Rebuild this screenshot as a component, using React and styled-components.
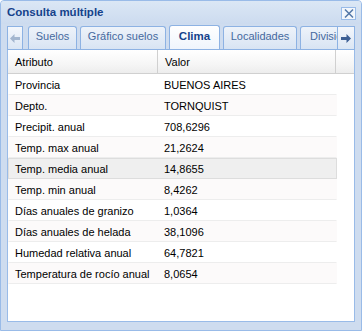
import React from 'react';
import styled, { createGlobalStyle } from 'styled-components';

const Global = createGlobalStyle`
  html, body { margin: 0; padding: 0; background: #ffffff; }
  body { font-family: Tahoma, "Liberation Sans", Arial, sans-serif; }
`;

const Window = styled.div`
  width: 362px;
  height: 331px;
  box-sizing: border-box;
  background: #cedcef;
  border: 1px solid #99bbe8;
  border-radius: 4px 4px 0 0;
  display: flex;
  flex-direction: column;
  overflow: hidden;
`;

const TitleBar = styled.div`
  height: 23px;
  display: flex;
  align-items: center;
  justify-content: space-between;
  padding: 0 5px 0 6px;
  background: linear-gradient(#dbe7f5, #ccdbef);
  flex: none;
`;

const Title = styled.span`
  font: bold 11.5px "Liberation Sans", Arial, sans-serif;
  color: #15428b;
  margin-top: -1px;
`;

const CloseBtn = styled.div`
  width: 15px;
  height: 13px;
  box-sizing: border-box;
  margin-top: 1px;
  border: 1px solid #99bbe8;
  background: #f3f7fc;
  display: flex;
  align-items: center;
  justify-content: center;
`;

const TabStrip = styled.div`
  height: 25px;
  margin: 0 6px;
  display: flex;
  align-items: flex-end;
  border-bottom: 1px solid #8db2e3;
  flex: none;
`;

const Scroller = styled.div`
  width: ${p => p.$w}px;
  height: 23px;
  box-sizing: border-box;
  border: 1px solid #8db2e3;
  border-bottom: none;
  background: linear-gradient(#f4f7fc, #dbe6f4);
  display: flex;
  align-items: center;
  justify-content: center;
  flex: none;
`;

const Clip = styled.div`
  display: flex;
  align-items: flex-end;
  gap: 3px;
  width: 314px;
  padding-left: 5px;
  box-sizing: border-box;
  overflow: hidden;
  flex: none;
  height: 25px;
`;

const Tab = styled.div`
  width: ${p => p.$w}px;
  height: ${p => (p.$active ? 25 : 23)}px;
  box-sizing: border-box;
  border: 1px solid #8db2e3;
  border-bottom: none;
  border-radius: 3px 3px 0 0;
  background: ${p => (p.$active ? 'linear-gradient(#ffffff, #eef4fc)' : 'linear-gradient(#eef3fa, #d8e4f3)')};
  color: ${p => (p.$active ? '#15428b' : '#45699e')};
  font: ${p => (p.$active ? 'bold 11.5px' : '11px')} "Liberation Sans", Arial, sans-serif;
  line-height: 14px;
  display: flex;
  align-items: flex-start;
  justify-content: ${p => (p.$clip ? 'flex-start' : 'center')};
  padding-left: ${p => (p.$clip ? 9 : 0)}px;
  padding-top: ${p => (p.$active ? 3 : 2)}px;
  white-space: nowrap;
  overflow: hidden;
  flex: none;
  margin-bottom: ${p => (p.$active ? -1 : 0)}px;
`;

const Body = styled.div`
  margin: 0 6px;
  height: 272px;
  box-sizing: border-box;
  background: #ffffff;
  border: 1px solid #99bbe8;
  border-top: none;
  display: flex;
  flex-direction: column;
`;

const Header = styled.div`
  display: flex;
  height: 23px;
  background: linear-gradient(#ffffff, #f6f6f6 60%, #ededed);
  border-bottom: 1px solid #d0d0d0;
  flex: none;
`;

const HeadCell = styled.div`
  width: ${p => p.$w}px;
  flex: ${p => (p.$w ? 'none' : 1)};
  box-sizing: border-box;
  padding-left: 7px;
  border-right: 1px solid #d0d0d0;
  display: flex;
  align-items: center;
  font: 11px "Liberation Sans", Arial, sans-serif;
  color: #000;
  &:last-child { border-right: none; }
`;

const Rows = styled.div`
  width: 329px;
  display: flex;
  flex-direction: column;
`;

const Row = styled.div`
  display: flex;
  height: 21px;
  box-sizing: border-box;
  border: 1px solid ${p => (p.$hover ? '#dddddd' : 'transparent')};
  border-bottom: 1px solid ${p => (p.$hover ? '#dddddd' : '#ededed')};
  background: ${p => (p.$hover ? '#efefef' : p.$alt ? '#fcfafa' : '#ffffff')};
`;

const Cell = styled.div`
  width: ${p => p.$w}px;
  flex: ${p => (p.$w ? 'none' : 1)};
  box-sizing: border-box;
  padding-left: 6px;
  display: flex;
  align-items: center;
  font: 11px "Liberation Sans", Arial, sans-serif;
  color: #000;
  white-space: nowrap;
`;

const data = [
  ['Provincia', 'BUENOS AIRES'],
  ['Depto.', 'TORNQUIST'],
  ['Precipit. anual', '708,6296'],
  ['Temp. max anual', '21,2624'],
  ['Temp. media anual', '14,8655'],
  ['Temp. min anual', '8,4262'],
  ['Días anuales de granizo', '1,0364'],
  ['Días anuales de helada', '38,1096'],
  ['Humedad relativa anual', '64,7821'],
  ['Temperatura de rocío anual', '8,0654'],
];

const tabs = [
  { label: 'Suelos', w: 49 },
  { label: 'Gráfico suelos', w: 86 },
  { label: 'Clima', w: 51, active: true },
  { label: 'Localidades', w: 74 },
  { label: 'Divisiones', w: 70, clip: true },
];

const Arrow = ({ dir }) => (
  <svg width="10" height="9" viewBox="0 0 10 9">
    <path
      d={dir === 'left' ? 'M0 4.5 L4.5 0 L4.5 3 L10 3 L10 6 L4.5 6 L4.5 9 Z' : 'M10 4.5 L5.5 0 L5.5 3 L0 3 L0 6 L5.5 6 L5.5 9 Z'}
      fill={dir === 'left' ? '#a3b6cf' : '#3d5f94'}
    />
  </svg>
);

const App = () => (
  <>
    <Global />
    <Window>
      <TitleBar>
        <Title>Consulta múltiple</Title>
        <CloseBtn>
          <svg width="10" height="9" viewBox="0 0 10 9">
            <path d="M1 0.5 L9 8.5 M9 0.5 L1 8.5" stroke="#5578a8" strokeWidth="1.5" />
          </svg>
        </CloseBtn>
      </TitleBar>
      <TabStrip>
        <Scroller $w={16}><Arrow dir="left" /></Scroller>
        <Clip>
          {tabs.map(t => (
            <Tab key={t.label} $w={t.w} $active={t.active} $clip={t.clip}>{t.label}</Tab>
          ))}
        </Clip>
        <Scroller $w={18}><Arrow dir="right" /></Scroller>
      </TabStrip>
      <Body>
        <Header>
          <HeadCell $w={150}>Atributo</HeadCell>
          <HeadCell $w={178}>Valor</HeadCell>
          <HeadCell />
        </Header>
        <Rows>
          {data.map(([k, v], i) => (
            <Row key={k} $alt={i % 2 === 1} $hover={i === 4}>
              <Cell $w={149}>{k}</Cell>
              <Cell>{v}</Cell>
            </Row>
          ))}
        </Rows>
      </Body>
    </Window>
  </>
);

export default App;
